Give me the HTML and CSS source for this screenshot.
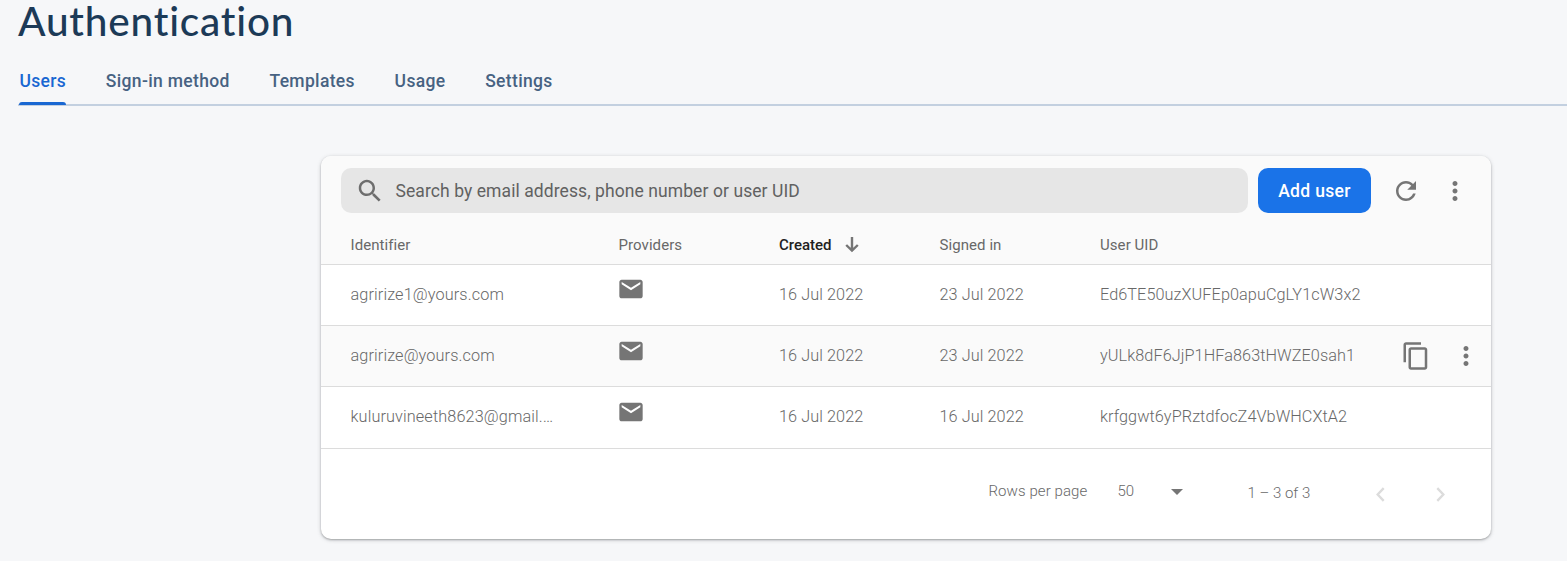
FILE: index.html
```html
<!DOCTYPE html>
<html lang="en">
<head>
<meta charset="utf-8">
<title>Authentication</title>
<link rel="stylesheet" href="styles.css">
</head>
<body>
<svg width="0" height="0" class="defs">
  <symbol id="mail" viewBox="0 0 24 24"><path d="M20 4H4c-1.100 0-1.990.9-1.990 2L2 18c0 1.100.9 2 2 2h16c1.100 0 2-.9 2-2V6c0-1.100-.9-2-2-2zm0 4l-8 5-8-5V6l8 5 8-5v2z"/></symbol>
  <symbol id="more" viewBox="0 0 24 24"><path d="M12 8c1.100 0 2-.9 2-2s-.9-2-2-2-2 .9-2 2 .9 2 2 2zm0 2c-1.100 0-2 .9-2 2s.9 2 2 2 2-.9 2-2-.9-2-2-2zm0 6c-1.100 0-2 .9-2 2s.9 2 2 2 2-.9 2-2-.9-2-2-2z"/></symbol>
</svg>
<header class="page-head">
  <h1 class="title">Authentication</h1>
  <nav class="tabs">
    <a class="tab active">Users</a>
    <a class="tab">Sign-in method</a>
    <a class="tab">Templates</a>
    <a class="tab">Usage</a>
    <a class="tab">Settings</a>
  </nav>
</header>
<main class="card">
  <div class="toolbar">
    <div class="search">
      <svg class="search-icon" viewBox="0 0 24 24"><path d="M15.500 14h-.79l-.28-.27C15.410 12.590 16 11.110 16 9.500 16 5.910 13.090 3 9.500 3S3 5.910 3 9.500 5.910 16 9.500 16c1.610 0 3.090-.59 4.230-1.570l.27.28v.79l5 4.990L20.490 19l-4.990-5zm-6 0C7.010 14 5 11.990 5 9.500S7.010 5 9.500 5 14 7.010 14 9.500 11.990 14 9.500 14z"/></svg>
      <span>Search by email address, phone number or user UID</span>
    </div>
    <button class="add">Add user</button>
    <svg class="refresh" viewBox="0 0 24 24"><path d="M17.650 6.350C16.200 4.900 14.210 4 12 4c-4.420 0-7.990 3.580-7.990 8s3.570 8 7.990 8c3.730 0 6.840-2.550 7.730-6h-2.080c-.82 2.330-3.040 4-5.650 4-3.310 0-6-2.690-6-6s2.690-6 6-6c1.660 0 3.140.69 4.220 1.780L13 11h7V4l-2.350 2.350z"/></svg>
    <svg class="more"><use href="#more"/></svg>
  </div>
  <div class="row head">
    <span>Identifier</span><span>Providers</span>
    <span class="created">Created<svg class="arrow" viewBox="0 0 14 16"><path d="M7 0v13M1.200 8 7 13.600 12.800 8"/></svg></span>
    <span>Signed in</span><span>User UID</span>
  </div>
  <div class="row">
    <span>agririze1@yours.com</span><svg class="mail"><use href="#mail"/></svg><span>16 Jul 2022</span><span>23 Jul 2022</span><span>Ed6TE50uzXUFEp0apuCgLY1cW3x2</span>
  </div>
  <div class="row hover">
    <span>agririze@yours.com</span><svg class="mail"><use href="#mail"/></svg><span>16 Jul 2022</span><span>23 Jul 2022</span><span>yULk8dF6JjP1HFa863tHWZE0sah1</span>
    <svg class="copy" viewBox="0 0 24 24"><path d="M16 1H4c-1.100 0-2 .9-2 2v14h2V3h12V1zm3 4H8c-1.100 0-2 .9-2 2v14c0 1.100.9 2 2 2h11c1.100 0 2-.9 2-2V7c0-1.100-.9-2-2-2zm0 16H8V7h11v14z"/></svg>
    <svg class="more"><use href="#more"/></svg>
  </div>
  <div class="row last">
    <span>kuluruvineeth8623@gmail.…</span><svg class="mail"><use href="#mail"/></svg><span>16 Jul 2022</span><span>16 Jul 2022</span><span>krfggwt6yPRztdfocZ4VbWHCXtA2</span>
  </div>
  <footer class="pager">
    <span class="per-page">Rows per page</span>
    <span class="size">50</span>
    <svg class="caret" viewBox="0 0 12 6"><path d="M0 0h12L6 6z"/></svg>
    <span class="range">1 – 3 of 3</span>
    <svg class="chev" viewBox="0 0 9 15"><path d="M7.700 1.200 1.700 7.500l6 6.300"/></svg>
    <svg class="chev next" viewBox="0 0 9 15"><path d="M1.300 1.200l6 6.300-6 6.300"/></svg>
  </footer>
</main>
</body>
</html>
```

FILE: styles.css
```css
* { box-sizing: border-box; }
body {
  margin: 0;
  height: 561px;
  overflow: hidden;
  background: #f6f7f9;
  font-family: Roboto, "Liberation Sans", sans-serif;
  color: #686868;
}
svg { display: block; fill: #757575; }
.defs { position: absolute; }
.page-head { padding-left: 18px; }
.title {
  margin: 0;
  height: 56px;
  font: 500 40.500px/42px Lato, sans-serif;
  font-variant-ligatures: none;
  letter-spacing: .8px;
  color: #1c3a57;
}
.tabs {
  display: flex;
  gap: 39.700px;
  height: 50px;
  padding-left: 1.400px;
  border-bottom: 2px solid #c3d0e0;
  font-size: 17.5px;
  font-weight: 500;
  letter-spacing: .34px;
  line-height: 50px;
  color: #476282;
  white-space: nowrap;
}
.tab { height: 50px; }
.active {
  position: relative;
  color: #1967d2;
}
.active::after {
  content: "";
  position: absolute;
  left: 0;
  right: 0;
  bottom: 1px;
  height: 3px;
  background: #1967d2;
  border-radius: 3px 3px 0 0;
}
.card {
  width: 1170px;
  height: 383px;
  margin: 50px 0 0 321px;
  background: #fff;
  border-radius: 10px;
  box-shadow: 0 1px 2px rgba(60,64,67,.35), 0 1px 4px rgba(60,64,67,.22);
  overflow: hidden;
}
.toolbar {
  display: flex;
  align-items: center;
  height: 69px;
  padding: 0 20px;
  background: #fafafa;
}
.search {
  display: flex;
  align-items: center;
  width: 907px;
  height: 45px;
  padding-left: 14px;
  background: #e6e6e6;
  border-radius: 10px;
  font-size: 17.5px;
  letter-spacing: .08px;
  color: #616161;
}
.search-icon { width: 30px; height: 30px; margin-right: 10.500px; fill: #6e6e6e; }
.add {
  width: 113px;
  height: 45px;
  margin-left: 10px;
  padding: 0;
  border: 0;
  border-radius: 10px;
  background: #1a73e8;
  color: #fff;
  font: 500 17.5px Roboto, sans-serif;
  letter-spacing: .34px;
}
.refresh { width: 30px; height: 30px; margin-left: 19.500px; }
.more { width: 30px; height: 30px; }
.toolbar .more { margin-left: 19.500px; }
.row {
  display: grid;
  grid-template-columns: 268px 160.500px 160.500px 160.500px 300.500px 50px 30px;
  align-items: center;
  height: 61px;
  padding-left: 29.500px;
  border-bottom: 1px solid #dcdcdc;
  font-size: 16.250px;
  font-weight: 300;
  letter-spacing: .07px;
  white-space: nowrap;
}
.row:not(.head) span { padding-bottom: 2px; }
.row:not(.head) span:first-child { letter-spacing: .12px; }
.head {
  height: 40px;
  background: #fafafa;
  font-size: 15px;
  font-weight: 400;
  letter-spacing: .07px;
}
.created { display: flex; align-items: center; color: #212121; font-weight: 500; letter-spacing: 0; }
.arrow { width: 14px; height: 16px; margin: 1px 0 0 13px; fill: none; stroke: #757575; stroke-width: 2.400; }
.hover { background: #fafafa; }
.last { height: 62px; }
.mail { width: 28px; height: 28px; margin: -12px 0 0 -2px; }
.hover .mail { margin-top: -10px; }
.copy { width: 30px; height: 30px; }
.pager {
  display: flex;
  align-items: center;
  height: 84px;
  padding-left: 667.500px;
  font-size: 15px;
  font-weight: 300;
  white-space: nowrap;
}
.per-page { width: 129px; letter-spacing: .08px; }
.size { width: 53px; }
.caret { width: 12px; height: 6px; margin-top: 1px; }
.range { margin: 4px 0 0 65px; }
.chev { width: 9px; height: 15px; margin: 6px 0 0 66px; fill: none; stroke: #dcdcdc; stroke-width: 2.400; }
.next { margin-left: 51px; }
```
